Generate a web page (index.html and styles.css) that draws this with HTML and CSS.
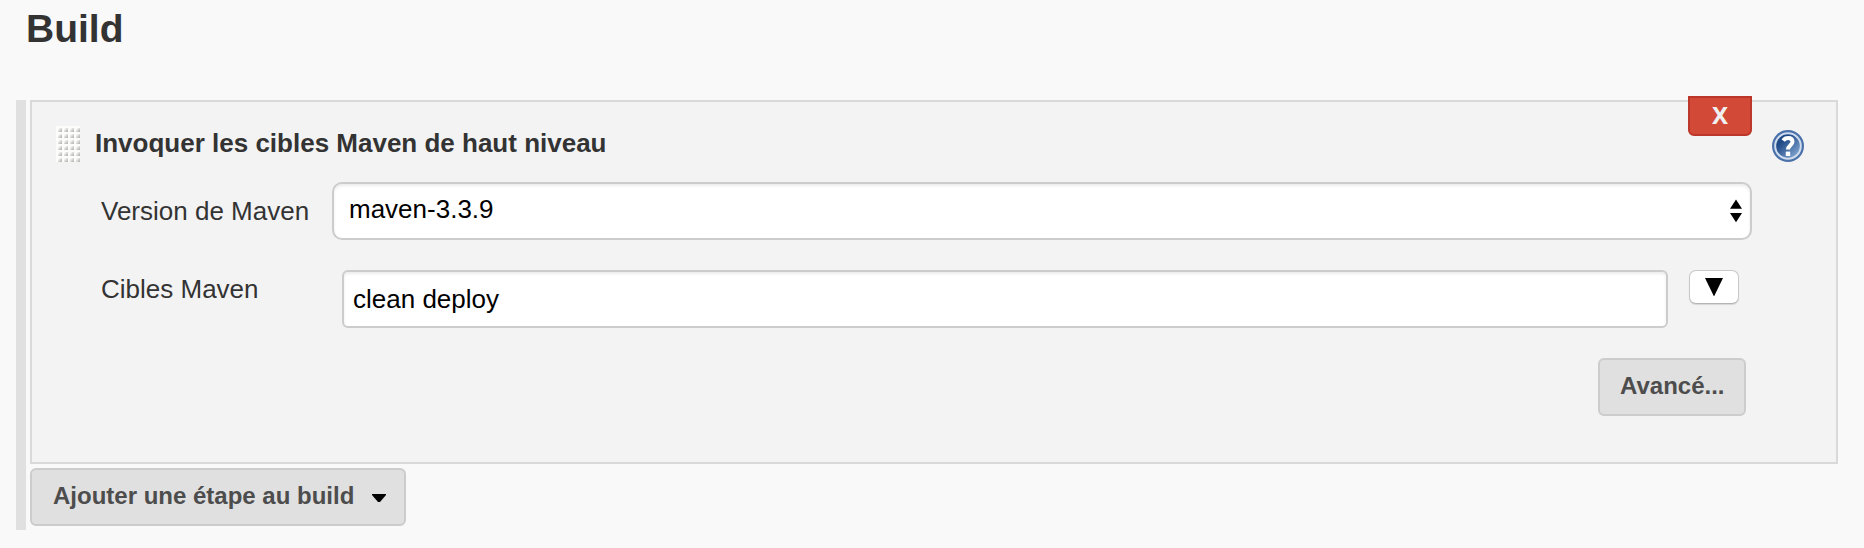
FILE: index.html
```
<!DOCTYPE html>
<html lang="fr">
<head>
<meta charset="utf-8">
<title>Build</title>
<link rel="stylesheet" href="styles.css">
</head>
<body>
<h1 class="section-title">Build</h1>
<main class="steps">
  <section class="step">
    <button class="delete" type="button">X</button>
    <header class="step-header">
      <svg class="grip" width="24" height="36" viewBox="0 0 24 36" aria-hidden="true">
        <defs>
          <linearGradient id="dot" x1="0" y1="0" x2="1" y2="1">
            <stop offset="0.15" stop-color="#fafaf9"/>
            <stop offset="1" stop-color="#aaaaa6"/>
          </linearGradient>
          <pattern id="dots" width="6" height="6" patternUnits="userSpaceOnUse">
            <rect width="6" height="6" fill="#fcfcfb"/>
            <rect x="2" y="2" width="4" height="4" fill="url(#dot)"/>
          </pattern>
        </defs>
        <rect width="24" height="36" fill="url(#dots)"/>
      </svg>
      <h2 class="step-title">Invoquer les cibles Maven de haut niveau</h2>
      <svg class="help" width="32" height="32" viewBox="0 0 32 32" role="img" aria-label="Aide">
        <defs>
          <linearGradient id="ball" x1="0" y1="0" x2="1" y2="1">
            <stop offset="0.3" stop-color="#204a87"/>
            <stop offset="0.95" stop-color="#8fb0da"/>
          </linearGradient>
        </defs>
        <circle cx="16" cy="16" r="16" fill="#4a71aa"/>
        <circle cx="16" cy="16" r="12.8" fill="url(#ball)" stroke="#cfdced" stroke-width="2"/>
        <path d="M11.2 10.6C12.5 8.6 14.3 8.1 16.2 8.1C19 8.1 20.5 9.6 20.5 11.8C20.5 15.2 16 15.4 16 19.6" fill="none" stroke="#fff" stroke-width="4"/>
        <rect x="13.8" y="21.6" width="4.4" height="4.4" fill="#fff"/>
      </svg>
    </header>
    <div class="row row-version">
      <span class="label">Version de Maven</span>
      <div class="select">
        <span class="value-version">maven-3.3.9</span>
        <svg width="12" height="24" viewBox="0 0 12 24" aria-hidden="true"><path d="M0 9.7L6 0.5L12 9.7ZM0 14L6 23.2L12 14Z"/></svg>
      </div>
    </div>
    <div class="row row-goals">
      <span class="label label-goals">Cibles Maven</span>
      <div class="input"><span class="value-goals">clean deploy</span></div>
      <button class="expand" type="button" aria-label="Agrandir">
        <svg width="18" height="18" viewBox="0 0 18 18" aria-hidden="true"><path d="M0 0H18L9 18.5Z"/></svg>
      </button>
    </div>
    <div class="row row-actions">
      <button class="btn advanced" type="button"><span class="advanced-text">Avancé...</span></button>
    </div>
  </section>
  <button class="btn add" type="button">
    <span class="add-text">Ajouter une étape au build</span>
    <svg class="caret" width="14" height="8" viewBox="0 0 14 8" aria-hidden="true"><path d="M0 0H14V1L8 8H6L0 1Z"/></svg>
  </button>
</main>
</body>
</html>
```
FILE: styles.css
```
* { box-sizing: border-box; }
body {
  margin: 0;
  height: 548px;
  overflow: hidden;
  background: #f9f9f9;
  color: #333;
  font: 26px/30px "Liberation Sans", Arial, sans-serif;
}
button { font-family: inherit; margin: 0; }
svg { display: block; flex: none; }
.section-title {
  margin: 0 0 42px 26px;
  font-size: 39px;
  line-height: 58px;
}
.steps {
  display: flex;
  flex-direction: column;
  align-items: flex-start;
  gap: 4px;
  height: 430px;
  margin: 0 26px 0 16px;
  border-left: 10px solid #e0e0e0;
  padding-left: 4px;
}
.step {
  position: relative;
  width: 100%;
  height: 364px;
  padding: 24px 32px 0 24px;
  background: #f3f3f3;
  border: 2px solid #d9d9d9;
}
.delete {
  position: absolute;
  top: -6px;
  right: 84px;
  width: 64px;
  height: 40px;
  padding: 0 0 2px;
  border: 2px solid #bd362a;
  border-radius: 0 0 6px 6px;
  background: #d34938;
  color: #f0f0f0;
  font: bold 24px/34px "Noto Sans", sans-serif;
}
.step-header { display: flex; height: 36px; }
.step-title {
  margin: 2px 0 0 15px;
  font-size: 26px;
  line-height: 30px;
}
.help { margin: 4px 0 0 auto; }
.row { display: flex; align-items: flex-start; }
.row-version { margin-top: 20px; padding-right: 52px; }
.row-goals { margin-top: 30px; }
.row-actions { margin-top: 30px; padding-right: 58px; justify-content: flex-end; }
.label { flex: none; width: 276px; padding: 14px 0 0 45px; white-space: nowrap; }
.label-goals { width: 286px; padding: 4px 0 0 45px; }
.select, .input {
  display: flex;
  align-items: center;
  height: 58px;
  border: 2px solid #ccc;
  background: #fff;
  box-shadow: inset 0 2px 3px rgba(0, 0, 0, .08);
  color: #000;
}
.select {
  flex: 1;
  justify-content: space-between;
  padding: 0 8px 4px 15px;
  border-radius: 10px;
}
.select svg { margin-top: 4px; }
.input { width: 1326px; padding: 0 0 1px 9px; border-radius: 6px; }
.expand {
  display: flex;
  justify-content: center;
  width: 50px;
  height: 34px;
  margin-left: 21px;
  padding: 7px 0 0;
  border: 1px solid #c8c8c8;
  border-bottom-color: #b4b4b4;
  border-radius: 7px;
  background: #fff;
  box-shadow: 0 1px 1px rgba(0, 0, 0, .12);
}
.btn {
  display: flex;
  align-items: center;
  height: 58px;
  padding: 0 0 3px 21px;
  border: 2px solid #ccc;
  border-radius: 6px;
  background: #e0e0e0;
  color: #4d4d4d;
  font-size: 24px;
  font-weight: bold;
  white-space: nowrap;
}
.advanced { width: 148px; padding-left: 20px; }
.add { width: 376px; justify-content: space-between; padding-right: 18px; }
.caret { margin-top: 4px; fill: #000; }
```
